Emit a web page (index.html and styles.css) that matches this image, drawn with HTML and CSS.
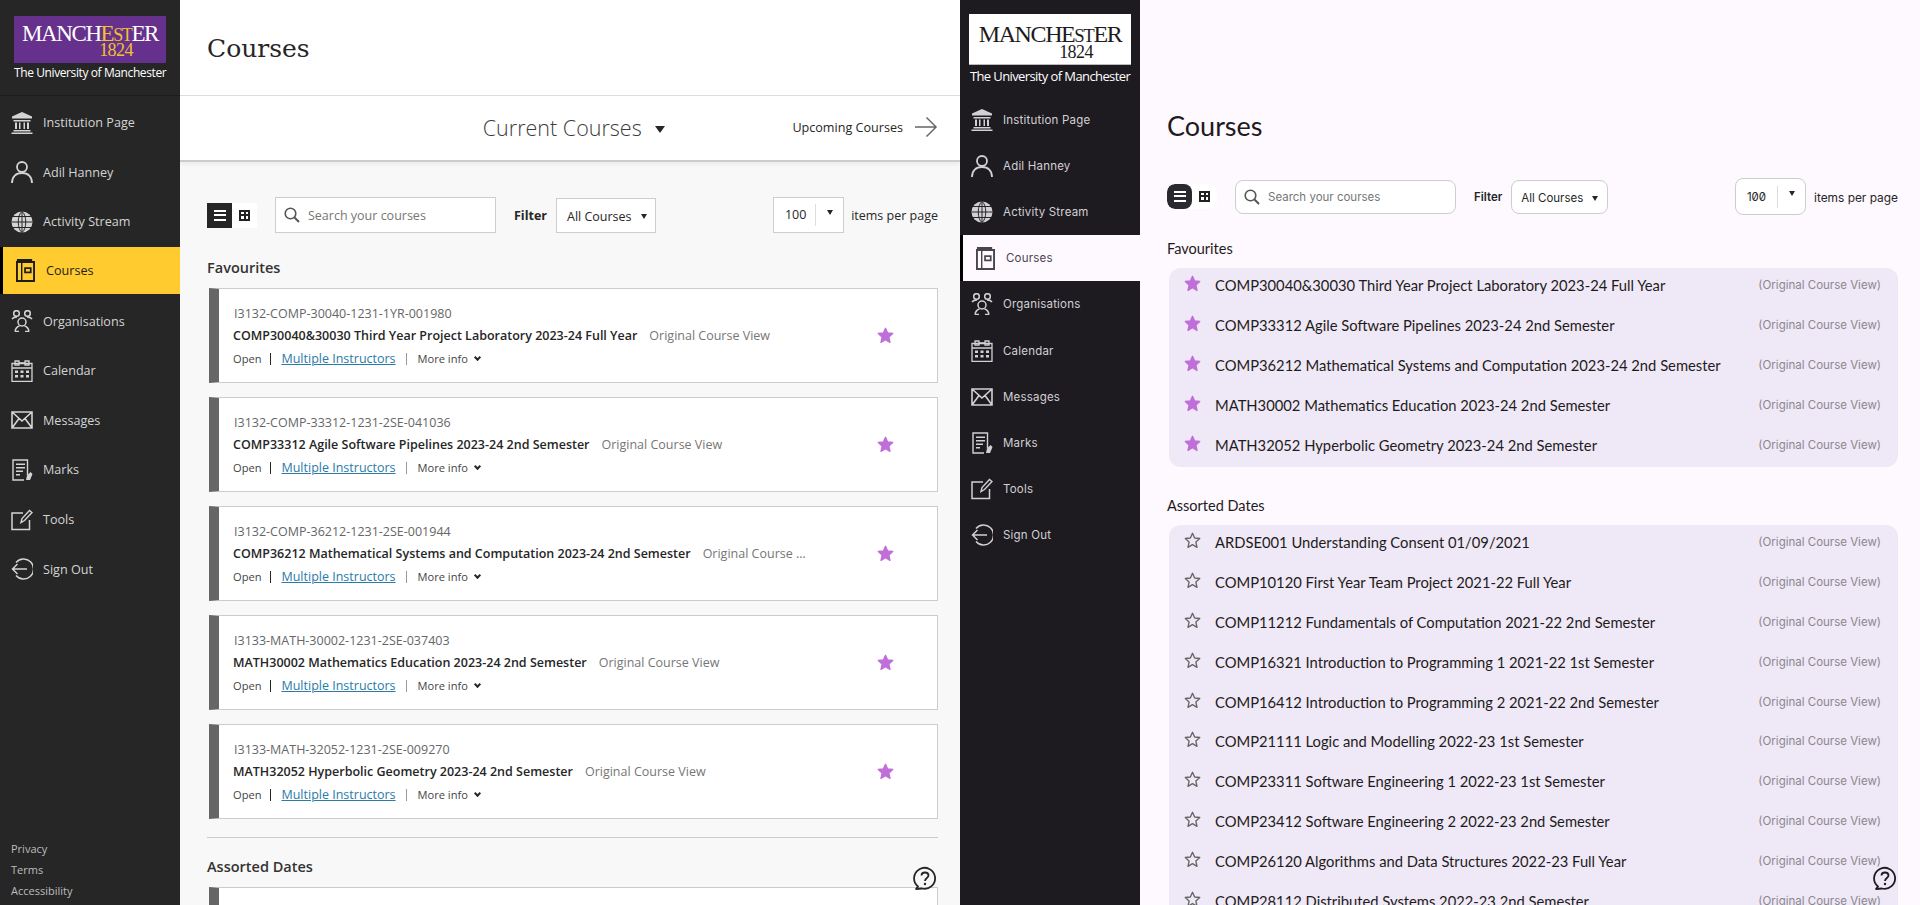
FILE: index.html
```html
<!DOCTYPE html>
<html lang="en">
<head>
    <meta charset="UTF-8">
    <title>Courses</title>
    <link rel="stylesheet" href="styles.css">
</head>
<body>

<svg class="sprite" xmlns="http://www.w3.org/2000/svg">
    <symbol id="i-bank" viewBox="0 0 22 22">
        <path d="M11 0 21 4.5V6.5H1V4.500Z" fill="currentColor"/>
        <path d="M2.500 8H19.500V9.500H2.500ZM4 10.500H6V17H4ZM8 10.500H9.500V17H8ZM12.500 10.500H14V17H12.500ZM16 10.500H18V17H16ZM2.500 18H19.500V19.500H2.500ZM.5 20.500H21.500V22H.5Z" fill="currentColor"/>
    </symbol>
    <symbol id="i-user" viewBox="0 0 22 22">
        <circle cx="11" cy="6" r="5" fill="none" stroke="currentColor" stroke-width="1.800"/>
        <path d="M1 22C1 15.500 5 12 11 12S21 15.500 21 22" fill="none" stroke="currentColor" stroke-width="1.800"/>
    </symbol>
    <symbol id="i-globe" viewBox="0 0 22 22">
        <circle cx="11" cy="11" r="10.500" fill="currentColor"/>
        <path d="M11 .5V21.500M.5 11H21.500M2 5.500H20M2 16.500H20M11 .5C6 4 6 18 11 21.500M11 .5C16 4 16 18 11 21.500" fill="none" stroke="#262626" stroke-width="1"/>
    </symbol>
    <symbol id="i-book" viewBox="0 0 20 24">
        <path d="M1 3V23H19V3ZM1 1H17" fill="none" stroke="currentColor" stroke-width="2"/>
        <path d="M6 3V23" fill="none" stroke="currentColor" stroke-width="1.500"/>
        <rect x="9.500" y="9.500" width="6" height="4.500" fill="none" stroke="currentColor" stroke-width="1.800"/>
    </symbol>
    <symbol id="i-people" viewBox="0 0 22 22">
        <g fill="none" stroke="currentColor" stroke-width="1.500">
            <circle cx="5.500" cy="3.500" r="2.800"/>
            <circle cx="16.500" cy="3.500" r="2.800"/>
            <circle cx="11" cy="12" r="4"/>
            <path d="M1 9C2 7.500 3.500 7 6 7M21 9C20 7.500 18.500 7 16 7M4 21.500C4.500 18.500 6.500 16.500 8.500 16M18 21.500C17.500 18.500 15.500 16.500 13.500 16M4 21.500H8M14 21.500H18"/>
        </g>
    </symbol>
    <symbol id="i-calendar" viewBox="0 0 22 22">
        <path d="M1 3.500H21V21.500H1ZM1 8H21" fill="none" stroke="currentColor" stroke-width="1.300"/>
        <path d="M4 1H8V5H4ZM14 1H18V5H14ZM8 3H14" fill="none" stroke="currentColor" stroke-width="1.300"/>
        <path d="M4 10.500H7V13H4ZM9.500 10.500H12.500V13H9.500ZM15 10.500H18V13H15ZM4 15H7V17.500H4ZM9.500 15H12.500V17.500H9.500ZM15 15H18V17.500H15Z" fill="currentColor"/>
    </symbol>
    <symbol id="i-mail" viewBox="0 0 22 18">
        <path d="M1 1H21V17H1ZM1 1 11 10 21 1M1 17 8 7.500M21 17 14 7.500" fill="none" stroke="currentColor" stroke-width="1.600"/>
    </symbol>
    <symbol id="i-marks" viewBox="0 0 22 22">
        <path d="M16.500 16V1H2V21H13" fill="none" stroke="currentColor" stroke-width="1.400"/>
        <path d="M5 4.500H14V6H5ZM5 8H14V9.500H5ZM5 11.500H12V13H5ZM5 15H9V16.500H5Z" fill="currentColor"/>
        <path d="M15 21 16 16.500 19.500 13 21.500 15 19 21Z" fill="currentColor"/>
    </symbol>
    <symbol id="i-tools" viewBox="0 0 22 22">
        <path d="M12 4H1V20.500H18.500V11" fill="none" stroke="currentColor" stroke-width="1.500"/>
        <path d="M10 13.500 11 9.500 18.500 1.500 21 3.500 13.500 11.500Z" fill="none" stroke="currentColor" stroke-width="1.400"/>
    </symbol>
    <symbol id="i-signout" viewBox="0 0 22 22">
        <path d="M5 4.500A10 10 0 1 1 5 17.500" fill="none" stroke="currentColor" stroke-width="1.500"/>
        <path d="M16 11H1.500M6.500 6 1.500 11 6.500 16" fill="none" stroke="currentColor" stroke-width="1.500"/>
    </symbol>
    <symbol id="i-star" viewBox="0 0 20 20">
        <path d="M10 1.500 12.500 7 18.500 7.700 14 11.800 15.300 18 10 14.900 4.700 18 6 11.800 1.500 7.700 7.500 7Z" stroke-linejoin="round"/>
    </symbol>
    <symbol id="i-help" viewBox="0 0 24 24">
        <path d="M5 20.500A10.500 10.500 0 1 1 9 22.500L3 23Z" fill="none" stroke="currentColor" stroke-width="1.800" stroke-linejoin="round"/>
        <path d="M8.500 9.500C8.500 5.500 15.500 5.500 15.500 9.500 15.500 12 12 12 12 15" fill="none" stroke="currentColor" stroke-width="1.800"/>
        <circle cx="12" cy="18" r="1.200" fill="currentColor"/>
    </symbol>
    <symbol id="i-search" viewBox="0 0 16 16">
        <circle cx="6.500" cy="6.500" r="5.300" fill="none" stroke="currentColor" stroke-width="1.600"/>
        <path d="M10.500 10.500 15 15" fill="none" stroke="currentColor" stroke-width="2"/>
    </symbol>
</svg>

<div class="screen">

    <!-- classic theme -->
    <section class="pane pane-classic">
        <aside class="sidebar">
            <div class="brand">
                <div class="logo">
                    <div class="logo-name">MANCH<span class="gold">E<small>ST</small></span>ER</div>
                    <div class="logo-year">1824</div>
                </div>
                <div class="logo-sub">The University of Manchester</div>
            </div>
            <nav class="nav">
                <a class="nav-item"><svg class="nav-icon"><use href="#i-bank"/></svg>Institution Page</a>
                <a class="nav-item"><svg class="nav-icon"><use href="#i-user"/></svg>Adil Hanney</a>
                <a class="nav-item"><svg class="nav-icon"><use href="#i-globe"/></svg>Activity Stream</a>
                <a class="nav-item active"><svg class="nav-icon"><use href="#i-book"/></svg>Courses</a>
                <a class="nav-item"><svg class="nav-icon"><use href="#i-people"/></svg>Organisations</a>
                <a class="nav-item"><svg class="nav-icon"><use href="#i-calendar"/></svg>Calendar</a>
                <a class="nav-item"><svg class="nav-icon"><use href="#i-mail"/></svg>Messages</a>
                <a class="nav-item"><svg class="nav-icon"><use href="#i-marks"/></svg>Marks</a>
                <a class="nav-item"><svg class="nav-icon"><use href="#i-tools"/></svg>Tools</a>
                <a class="nav-item"><svg class="nav-icon"><use href="#i-signout"/></svg>Sign Out</a>
            </nav>
            <div class="legal">
                <a>Privacy</a>
                <a>Terms</a>
                <a>Accessibility</a>
            </div>
        </aside>
        <main class="main">
            <header class="page-header"><h1>Courses</h1></header>
            <div class="term-bar">
                <div class="term-current">Current Courses <span class="term-caret"></span></div>
                <a class="term-next">Upcoming Courses
                    <svg class="term-arrow" viewBox="0 0 24 22"><path d="M0 11H22M12 1 22 11 12 21" fill="none" stroke="currentColor" stroke-width="1.500"/></svg>
                </a>
            </div>
            <div class="content">
                <div class="toolbar">
                    <div class="view-toggle">
                        <span class="view-btn on"><i class="lines"></i></span>
                        <span class="view-btn"><i class="tiles"></i></span>
                    </div>
                    <div class="search"><svg class="search-icon"><use href="#i-search"/></svg>Search your courses</div>
                    <b class="filter-label">Filter</b>
                    <div class="select">All Courses<span class="caret"></span></div>
                    <div class="per-page"><span class="per-num">100</span><span class="per-arrow"><span class="caret"></span></span></div>
                    <span class="per-label">items per page</span>
                </div>

                <h2 class="group-title">Favourites</h2>

                <article class="card">
                    <div class="card-body">
                        <div class="card-id">I3132-COMP-30040-1231-1YR-001980</div>
                        <div class="card-title"><b>COMP30040&amp;30030 Third Year Project Laboratory 2023-24 Full Year</b><span>Original Course View</span></div>
                        <div class="card-meta">Open<i class="pipe"></i><a>Multiple Instructors</a><i class="pipe light"></i>More info <span class="chev"></span></div>
                    </div>
                    <svg class="star on"><use href="#i-star"/></svg>
                </article>
                <article class="card">
                    <div class="card-body">
                        <div class="card-id">I3132-COMP-33312-1231-2SE-041036</div>
                        <div class="card-title"><b>COMP33312 Agile Software Pipelines 2023-24 2nd Semester</b><span>Original Course View</span></div>
                        <div class="card-meta">Open<i class="pipe"></i><a>Multiple Instructors</a><i class="pipe light"></i>More info <span class="chev"></span></div>
                    </div>
                    <svg class="star on"><use href="#i-star"/></svg>
                </article>
                <article class="card">
                    <div class="card-body">
                        <div class="card-id">I3132-COMP-36212-1231-2SE-001944</div>
                        <div class="card-title"><b>COMP36212 Mathematical Systems and Computation 2023-24 2nd Semester</b><span>Original Course View</span></div>
                        <div class="card-meta">Open<i class="pipe"></i><a>Multiple Instructors</a><i class="pipe light"></i>More info <span class="chev"></span></div>
                    </div>
                    <svg class="star on"><use href="#i-star"/></svg>
                </article>
                <article class="card">
                    <div class="card-body">
                        <div class="card-id">I3133-MATH-30002-1231-2SE-037403</div>
                        <div class="card-title"><b>MATH30002 Mathematics Education 2023-24 2nd Semester</b><span>Original Course View</span></div>
                        <div class="card-meta">Open<i class="pipe"></i><a>Multiple Instructors</a><i class="pipe light"></i>More info <span class="chev"></span></div>
                    </div>
                    <svg class="star on"><use href="#i-star"/></svg>
                </article>
                <article class="card">
                    <div class="card-body">
                        <div class="card-id">I3133-MATH-32052-1231-2SE-009270</div>
                        <div class="card-title"><b>MATH32052 Hyperbolic Geometry 2023-24 2nd Semester</b><span>Original Course View</span></div>
                        <div class="card-meta">Open<i class="pipe"></i><a>Multiple Instructors</a><i class="pipe light"></i>More info <span class="chev"></span></div>
                    </div>
                    <svg class="star on"><use href="#i-star"/></svg>
                </article>

                <hr class="group-rule">
                <h2 class="group-title">Assorted Dates</h2>
                <article class="card"></article>
            </div>
            <svg class="help"><use href="#i-help"/></svg>
        </main>
    </section>

    <!-- new theme -->
    <section class="pane pane-modern">
        <aside class="sidebar">
            <div class="brand">
                <div class="logo">
                    <div class="logo-name">MANCHE<small>ST</small>ER</div>
                    <div class="logo-year">1824</div>
                </div>
                <div class="logo-sub">The University of Manchester</div>
            </div>
            <nav class="nav">
                <a class="nav-item"><svg class="nav-icon"><use href="#i-bank"/></svg>Institution Page</a>
                <a class="nav-item"><svg class="nav-icon"><use href="#i-user"/></svg>Adil Hanney</a>
                <a class="nav-item"><svg class="nav-icon"><use href="#i-globe"/></svg>Activity Stream</a>
                <a class="nav-item active"><svg class="nav-icon"><use href="#i-book"/></svg>Courses</a>
                <a class="nav-item"><svg class="nav-icon"><use href="#i-people"/></svg>Organisations</a>
                <a class="nav-item"><svg class="nav-icon"><use href="#i-calendar"/></svg>Calendar</a>
                <a class="nav-item"><svg class="nav-icon"><use href="#i-mail"/></svg>Messages</a>
                <a class="nav-item"><svg class="nav-icon"><use href="#i-marks"/></svg>Marks</a>
                <a class="nav-item"><svg class="nav-icon"><use href="#i-tools"/></svg>Tools</a>
                <a class="nav-item"><svg class="nav-icon"><use href="#i-signout"/></svg>Sign Out</a>
            </nav>
        </aside>
        <main class="main">
            <header class="page-header"><h1>Courses</h1></header>
            <div class="content">
                <div class="toolbar">
                    <div class="view-toggle">
                        <span class="view-btn on"><i class="lines"></i></span>
                        <span class="view-btn"><i class="tiles"></i></span>
                    </div>
                    <div class="search"><svg class="search-icon"><use href="#i-search"/></svg>Search your courses</div>
                    <b class="filter-label">Filter</b>
                    <div class="select">All Courses<span class="caret"></span></div>
                    <div class="per-page"><span class="per-num">100</span><span class="per-arrow"><span class="caret"></span></span></div>
                    <span class="per-label">items per page</span>
                </div>

                <h2 class="group-title">Favourites</h2>
                <ul class="course-list">
                    <li><svg class="star on"><use href="#i-star"/></svg><span class="course-name">COMP30040&amp;30030 Third Year Project Laboratory 2023-24 Full Year</span><span class="course-view">(Original Course View)</span></li>
                    <li><svg class="star on"><use href="#i-star"/></svg><span class="course-name">COMP33312 Agile Software Pipelines 2023-24 2nd Semester</span><span class="course-view">(Original Course View)</span></li>
                    <li><svg class="star on"><use href="#i-star"/></svg><span class="course-name">COMP36212 Mathematical Systems and Computation 2023-24 2nd Semester</span><span class="course-view">(Original Course View)</span></li>
                    <li><svg class="star on"><use href="#i-star"/></svg><span class="course-name">MATH30002 Mathematics Education 2023-24 2nd Semester</span><span class="course-view">(Original Course View)</span></li>
                    <li><svg class="star on"><use href="#i-star"/></svg><span class="course-name">MATH32052 Hyperbolic Geometry 2023-24 2nd Semester</span><span class="course-view">(Original Course View)</span></li>
                </ul>

                <h2 class="group-title">Assorted Dates</h2>
                <ul class="course-list">
                    <li><svg class="star"><use href="#i-star"/></svg><span class="course-name">ARDSE001 Understanding Consent 01/09/2021</span><span class="course-view">(Original Course View)</span></li>
                    <li><svg class="star"><use href="#i-star"/></svg><span class="course-name">COMP10120 First Year Team Project 2021-22 Full Year</span><span class="course-view">(Original Course View)</span></li>
                    <li><svg class="star"><use href="#i-star"/></svg><span class="course-name">COMP11212 Fundamentals of Computation 2021-22 2nd Semester</span><span class="course-view">(Original Course View)</span></li>
                    <li><svg class="star"><use href="#i-star"/></svg><span class="course-name">COMP16321 Introduction to Programming 1 2021-22 1st Semester</span><span class="course-view">(Original Course View)</span></li>
                    <li><svg class="star"><use href="#i-star"/></svg><span class="course-name">COMP16412 Introduction to Programming 2 2021-22 2nd Semester</span><span class="course-view">(Original Course View)</span></li>
                    <li><svg class="star"><use href="#i-star"/></svg><span class="course-name">COMP21111 Logic and Modelling 2022-23 1st Semester</span><span class="course-view">(Original Course View)</span></li>
                    <li><svg class="star"><use href="#i-star"/></svg><span class="course-name">COMP23311 Software Engineering 1 2022-23 1st Semester</span><span class="course-view">(Original Course View)</span></li>
                    <li><svg class="star"><use href="#i-star"/></svg><span class="course-name">COMP23412 Software Engineering 2 2022-23 2nd Semester</span><span class="course-view">(Original Course View)</span></li>
                    <li><svg class="star"><use href="#i-star"/></svg><span class="course-name">COMP26120 Algorithms and Data Structures 2022-23 Full Year</span><span class="course-view">(Original Course View)</span></li>
                    <li><svg class="star"><use href="#i-star"/></svg><span class="course-name">COMP28112 Distributed Systems 2022-23 2nd Semester</span><span class="course-view">(Original Course View)</span></li>
                </ul>
            </div>
            <svg class="help"><use href="#i-help"/></svg>
        </main>
    </section>
</div>

</body>
</html>
```

FILE: styles.css
```css
* {
    box-sizing: border-box;
}

html, body {
    margin: 0;
    height: 905px;
    overflow: hidden;
}

.sprite {
    display: none;
}

.screen {
    display: flex;
    width: 1920px;
    height: 905px;
}

.pane {
    display: flex;
    width: 960px;
    height: 905px;
    overflow: hidden;
}

.sidebar {
    display: flex;
    flex-direction: column;
    width: 180px;
    flex: none;
}

.main {
    position: relative;
    flex: 1;
    min-width: 0;
    height: 905px;
    overflow: hidden;
}

h1, h2 {
    margin: 0;
    font-weight: normal;
}

/* logo */
.logo {
    display: flex;
    flex-direction: column;
    align-items: center;
    font-family: "Liberation Serif", serif;
}

.logo-name {
    letter-spacing: -1.4px;
    line-height: 16px;
    white-space: nowrap;
}

.logo-name small {
    font-size: 78%;
}

.logo-year {
    font-size: 18px;
    line-height: 11px;
    letter-spacing: -.6px;
    margin: 2px 0 0 52px;
}

.logo-sub {
    font-family: "Open Sans", sans-serif;
    color: #fff;
    text-align: center;
    white-space: nowrap;
}

/* nav */
.nav-item {
    display: flex;
    align-items: center;
    padding-left: 11px;
    gap: 10px;
}

.nav-icon {
    width: 22px;
    height: 22px;
    flex: none;
}

.nav-item.active {
    border-left: 3px solid #000;
    padding-left: 13px;
}

.nav-item.active .nav-icon {
    width: 19px;
    height: 23px;
    margin-right: 1px;
}

/* toolbar */
.toolbar {
    display: flex;
    align-items: center;
    height: 36px;
}

.view-toggle {
    display: flex;
    width: 50px;
    height: 25px;
    background: #fff;
    margin-right: 18px;
}

.view-btn {
    flex: 1;
    display: flex;
    align-items: center;
    justify-content: center;
}

.view-btn.on {
    background: #262626;
    color: #fff;
}

.lines {
    width: 12px;
    height: 11px;
    border-top: 2px solid #fff;
    border-bottom: 2px solid #fff;
    position: relative;
}

.lines::after {
    content: "";
    position: absolute;
    left: 0;
    right: 0;
    top: 2.5px;
    height: 2px;
    background: #fff;
}

.tiles {
    width: 11px;
    height: 11px;
    background:
        linear-gradient(#222, #222) center / 100% 2px no-repeat,
        linear-gradient(#222, #222) center / 2px 100% no-repeat,
        #fff;
    border: 2px solid #222;
}

.search {
    display: flex;
    align-items: center;
    width: 221px;
    height: 36px;
    border: 1px solid #cdcdcd;
    background: #fff;
    color: #767676;
    padding-left: 8px;
    margin-right: 18px;
}

.search-icon {
    width: 16px;
    height: 16px;
    color: #555;
    margin-right: 8px;
}

.filter-label {
    margin-right: 9px;
    color: #262626;
}

.select {
    display: flex;
    align-items: center;
    height: 35px;
    border: 1px solid #cdcdcd;
    background: #fff;
    color: #262626;
    padding: 3px 8px 0 10px;
}

.caret {
    width: 0;
    height: 0;
    border-left: 3px solid transparent;
    border-right: 3px solid transparent;
    border-top: 5px solid #262626;
    margin-left: 9px;
}

.per-page {
    display: flex;
    align-items: center;
    width: 71px;
    height: 36px;
    margin-left: auto;
    border: 1px solid #cdcdcd;
    background: #fff;
    color: #262626;
}

.per-num {
    width: 42px;
    padding-left: 2px;
    text-align: center;
    line-height: 22px;
    border-right: 1px solid #ddd;
}

.per-arrow {
    display: flex;
    flex: 1;
    justify-content: center;
    margin-top: -6px;
}

.per-arrow .caret {
    margin-left: 0;
}

.per-label {
    margin-left: 7px;
    white-space: nowrap;
    color: #262626;
}

.star {
    width: 17px;
    height: 17px;
    flex: none;
    fill: none;
    stroke: #666;
    stroke-width: 1.6px;
}

.star.on {
    fill: #c06fd8;
    stroke: #c06fd8;
}

.help {
    position: absolute;
    right: 23px;
    top: 866px;
    width: 24px;
    height: 24px;
    color: #262626;
}

/* classic theme */
.pane-classic {
    font-family: "Open Sans", sans-serif;
    font-size: 12.500px;
    background: #f8f8f8;
    color: #262626;
}

.pane-classic .sidebar {
    background: #262626;
    color: #d4d4d4;
}

.pane-classic .brand {
    height: 96px;
    padding: 16px 14px 0;
    border-bottom: 1px solid #1c1c1c;
}

.pane-classic .logo {
    height: 47px;
    background: #66318c;
    color: #fff;
    padding-top: 10px;
}

.pane-classic .logo-name {
    font-size: 23px;
}

.pane-classic .gold,
.pane-classic .logo-year {
    color: #f0c230;
}

.pane-classic .logo-sub {
    font-size: 12px;
    letter-spacing: -.4px;
    line-height: 18px;
    margin-top: 1px;
}

.pane-classic .nav {
    padding-top: 2px;
}

.pane-classic .nav-item {
    height: 49.600px;
    font-size: 12.600px;
}

.pane-classic .nav-item.active {
    height: 47px;
    margin: .6px 0 2px;
    background: #ffcb2f;
    color: #1d1d1d;
}

.pane-classic .legal {
    margin-top: auto;
    padding: 0 0 4px 11px;
    font-size: 11px;
    color: #bdbdbd;
}

.pane-classic .legal a {
    display: block;
    line-height: 21px;
}

.pane-classic .page-header {
    height: 96px;
    padding: 27px 27px 0;
    background: #fff;
    border-bottom: 1px solid #ddd;
}

.pane-classic h1 {
    font-family: "DejaVu Serif", serif;
    font-size: 25px;
    line-height: 44px;
    color: #262626;
}

.term-bar {
    position: relative;
    display: flex;
    align-items: center;
    justify-content: center;
    height: 66px;
    padding-bottom: 2px;
    background: #fff;
    border-bottom: 2px solid #ccc;
    box-shadow: 0 3px 3px #eee;
}

.term-current {
    font-size: 21.500px;
    font-weight: 300;
    color: #3c3c3c;
    margin-left: 8px;
}

.term-caret {
    display: inline-block;
    width: 0;
    height: 0;
    border-left: 5px solid transparent;
    border-right: 5px solid transparent;
    border-top: 7px solid #262626;
    margin-left: 8px;
    vertical-align: 3px;
}

/* link sits over the centred heading */
.term-next {
    position: absolute;
    right: 22px;
    top: 20px;
    display: flex;
    align-items: center;
    gap: 12px;
    font-size: 12.600px;
}

.term-arrow {
    width: 23px;
    height: 22px;
    color: #666;
}

.pane-classic .content {
    padding: 35px 22px 0 27px;
}

.pane-classic .group-title {
    font-size: 14.500px;
    font-weight: 600;
    line-height: 20px;
    margin: 25px 0 10px;
    color: #333;
}

.pane-classic .group-rule + .group-title {
    margin-top: 19px;
}

.card {
    display: flex;
    align-items: center;
    height: 95px;
    margin: 0 0 14px 2px;
    padding-left: 14px;
    border: 1px solid #ccc;
    border-left: 10px solid #666;
    background: #fff;
}

.card-body {
    width: 644px;
    min-width: 0;
    padding-top: 3px;
}

.card-id {
    color: #666;
    line-height: 20px;
    margin: 0 0 1px 1px;
}

.card-title {
    line-height: 22px;
    width: 573px;
    white-space: nowrap;
    overflow: hidden;
    text-overflow: ellipsis;
    color: #767676;
}

.card-title b {
    font-weight: 600;
    color: #262626;
    margin-right: 12px;
}

.card-meta {
    display: flex;
    align-items: center;
    height: 24px;
    font-size: 11.100px;
    color: #444;
}

.card-meta a {
    font-size: 12.500px;
    color: #2a7ba8;
    text-decoration: underline;
}

.pipe {
    width: 1px;
    height: 12px;
    margin: 0 10px 0 9px;
    background: #262626;
}

.pipe.light {
    margin: 0 11px 0 10px;
    background: #999;
}

.chev {
    width: 5px;
    height: 5px;
    margin: -2px 0 0 7px;
    border-right: 2px solid #262626;
    border-bottom: 2px solid #262626;
    transform: rotate(45deg);
}

.card .star {
    margin-top: -1px;
}

.group-rule {
    height: 1px;
    margin: 18px 0 0;
    border: 0;
    background: #ccc;
}

/* new theme */
.pane-modern {
    font-family: "Lato", sans-serif;
    background: #fef8ff;
    color: #1d1b20;
}

.pane-modern .sidebar {
    background: #1d1b20;
    color: #d2d0d4;
}

.pane-modern .brand {
    height: 97px;
    padding: 14px 9px 0;
}

.pane-modern .logo {
    height: 51px;
    background: #fff;
    color: #1d1b20;
    padding-top: 12px;
    border-bottom: 1px solid #bbb;
}

.pane-modern .logo-name {
    font-size: 24px;
}

.pane-modern .logo-year {
    margin-top: 3px;
}

.pane-modern .logo-sub {
    font-size: 13px;
    letter-spacing: -.6px;
    line-height: 18px;
    margin-top: 2px;
}

.pane-modern .nav-item {
    height: 46.100px;
    font-family: "Inter", sans-serif;
    font-size: 11.500px;
    letter-spacing: .2px;
}

.pane-modern .nav-item.active {
    background: #fef8ff;
    color: #49454f;
}

.pane-modern .page-header {
    height: 180px;
    padding: 107px 27px 0;
}

.pane-modern h1 {
    font-size: 27px;
    line-height: 38px;
    color: #1d1b20;
}

.pane-modern .content {
    padding: 0 22px 0 27px;
}

.pane-modern .toolbar {
    font-family: "Inter", sans-serif;
    font-size: 11.500px;
}

.pane-modern .view-toggle {
    border-radius: 8px;
    margin-top: -4px;
    overflow: hidden;
}

.pane-modern .view-btn.on {
    background: #2b2930;
    border-radius: 8px;
}

.pane-modern .search {
    height: 34px;
    border-radius: 8px;
    background: #fff;
    margin-top: -2px;
}

.pane-modern .select {
    height: 34px;
    padding: 2px 9px 0 9px;
    border-radius: 8px;
    margin: -2px 0 0 -1px;
}

.pane-modern .filter-label {
    margin: -2px 10px 0 0;
    font-weight: 600;
}

.pane-modern .per-page {
    height: 37px;
    margin-top: -3px;
    border-radius: 8px;
}

.pane-modern .per-num {
    padding-left: 0;
    font-variant-numeric: slashed-zero;
}

.pane-modern .per-label {
    margin: -2px 0 0 8px;
    font-size: 11.900px;
}

.pane-modern .group-title {
    font-size: 14.500px;
    line-height: 20px;
    margin: 23px 0 9px;
}

.course-list {
    list-style: none;
    margin: 0 0 0 2px;
    padding: 0 17px 0 15px;
    background: #efe8f6;
    border-radius: 12px;
}

.course-list li {
    display: flex;
    align-items: center;
    height: 39.800px;
    padding-bottom: 5px;
}

.course-list .star {
    margin: -3px 14px 0 0;
}

.course-name {
    flex: 1;
    font-size: 14.750px;
    white-space: nowrap;
}

.course-view {
    font-family: "Inter", sans-serif;
    font-size: 11.500px;
    color: #8b8790;
    white-space: nowrap;
}

.pane-modern .course-list + .group-title {
    margin-top: 29px;
}

.pane-modern .help {
    color: #1d1b20;
}
```
